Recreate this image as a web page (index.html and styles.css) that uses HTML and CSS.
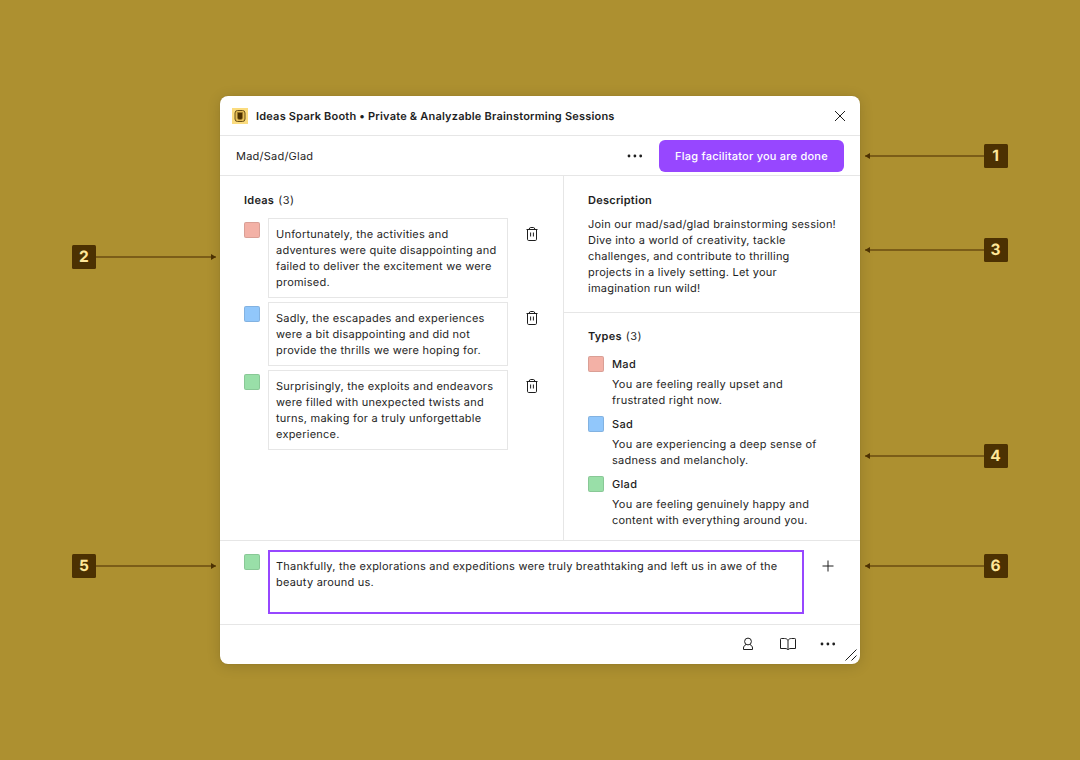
FILE: index.html
```html
<!DOCTYPE html>
<html lang="en">
<head>
<meta charset="utf-8">
<title>Ideas Spark Booth</title>
<link rel="stylesheet" href="styles.css">
</head>
<body>
<svg class="symbols" width="0" height="0">
  <symbol id="trash" viewBox="0 0 16 18"><path d="M2.500 4.500h11M5.200 4.300q.1-1.800 1.500-1.800h2.600q1.400 0 1.500 1.800M3.500 4.500v9.800q0 1.200 1.200 1.200h6.600q1.200 0 1.200-1.200V4.500M6.600 7.500v4M9.400 7.500v4"/></symbol>
  <symbol id="dots" viewBox="0 0 16 16"><circle cx="2" cy="8" r="1.400"/><circle cx="7.900" cy="8" r="1.400"/><circle cx="13.700" cy="8" r="1.400"/></symbol>
</svg>
<div class="stage">
  <aside class="side">
    <div class="callout left c2"><b class="num">2</b><i class="line"></i></div>
    <div class="callout left c5"><b class="num">5</b><i class="line"></i></div>
  </aside>
  <main class="window">
    <header class="titlebar">
      <svg class="logo" width="16" height="16" viewBox="0 0 16 16"><rect width="16" height="16" fill="#fbdc7f"/><rect x="3" y="2.500" width="10" height="11" rx="2.500" fill="#e5bd55" stroke="#695019"/><path d="M5.500 4.500h5v5.800l-1.300 1.200H6.800L5.500 10.300z" fill="#4c3102" stroke="#98782f" stroke-width=".7"/></svg>
      <h1 class="title">Ideas Spark Booth • Private &amp; Analyzable Brainstorming Sessions</h1>
      <svg class="icon" width="16" height="16" viewBox="0 0 16 16"><path d="M3 3l10 10M13 3L3 13"/></svg>
    </header>
    <div class="toolbar">
      <span class="name">Mad/Sad/Glad</span>
      <svg class="dots" width="16" height="16"><use href="#dots"/></svg>
      <button class="button">Flag facilitator you are done</button>
    </div>
    <div class="content">
      <section class="ideas">
        <h2 class="heading">Ideas <span class="count">(3)</span></h2>
        <div class="idea"><i class="swatch mad"></i><p class="note">Unfortunately, the activities and<br>adventures were quite disappointing and<br>failed to deliver the excitement we were<br>promised.</p><svg class="icon trash" width="16" height="18"><use href="#trash"/></svg></div>
        <div class="idea"><i class="swatch sad"></i><p class="note">Sadly, the escapades and experiences<br>were a bit disappointing and did not<br>provide the thrills we were hoping for.</p><svg class="icon trash" width="16" height="18"><use href="#trash"/></svg></div>
        <div class="idea"><i class="swatch glad"></i><p class="note">Surprisingly, the exploits and endeavors<br>were filled with unexpected twists and<br>turns, making for a truly unforgettable<br>experience.</p><svg class="icon trash" width="16" height="18"><use href="#trash"/></svg></div>
      </section>
      <div class="info">
        <section class="description">
          <h2 class="heading">Description</h2>
          <p class="text">Join our mad/sad/glad brainstorming session!<br>Dive into a world of creativity, tackle<br>challenges, and contribute to thrilling<br>projects in a lively setting. Let your<br>imagination run wild!</p>
        </section>
        <section class="types">
          <h2 class="heading">Types <span class="count">(3)</span></h2>
          <div class="type"><i class="swatch mad"></i><div class="detail"><h3 class="label">Mad</h3><p class="text">You are feeling really upset and<br>frustrated right now.</p></div></div>
          <div class="type"><i class="swatch sad"></i><div class="detail"><h3 class="label">Sad</h3><p class="text">You are experiencing a deep sense of<br>sadness and melancholy.</p></div></div>
          <div class="type"><i class="swatch glad"></i><div class="detail"><h3 class="label">Glad</h3><p class="text">You are feeling genuinely happy and<br>content with everything around you.</p></div></div>
        </section>
      </div>
    </div>
    <div class="composer">
      <i class="swatch glad"></i>
      <div class="field">Thankfully, the explorations and expeditions were truly breathtaking and left us in awe of the<br>beauty around us.</div>
      <svg class="icon plus" width="16" height="16" viewBox="0 0 16 16"><path d="M8 2.500v11M2.500 8h11"/></svg>
    </div>
    <footer class="footer">
      <svg class="icon" width="16" height="16" viewBox="0 0 16 16"><circle cx="8" cy="5.500" r="3.400"/><path d="M6 8.500C4.600 9.300 3.500 10.500 3.500 12v1.500h9V12c0-1.500-1.100-2.700-2.500-3.500"/></svg>
      <svg class="icon" width="18" height="16" viewBox="0 0 18 16"><path d="M9 4.500C8.500 3.200 7.200 2.500 5.500 2.500H2.300q-.8 0-.8.800v9.200H6c1.500 0 2.500.4 3 1.500.5-1.100 1.500-1.500 3-1.500h4.500V3.300q0-.8-.8-.8h-3.200C10.800 2.500 9.500 3.200 9 4.500zM9 4.500v9"/></svg>
      <svg class="dots" width="16" height="16"><use href="#dots"/></svg>
      <svg class="icon resize" width="14" height="14" viewBox="0 0 14 14"><path d="M1.500 12.500l11-11M7.500 12.500l5-5"/></svg>
    </footer>
  </main>
  <aside class="side">
    <div class="callout right c1"><i class="line"></i><b class="num">1</b></div>
    <div class="callout right c3"><i class="line"></i><b class="num">3</b></div>
    <div class="callout right c4"><i class="line"></i><b class="num">4</b></div>
    <div class="callout right c6"><i class="line"></i><b class="num">6</b></div>
  </aside>
</div>
</body>
</html>
```

FILE: styles.css
```css
* { box-sizing: border-box; }
body { margin: 0; background: #ad9030; color: #1e1e1e; font: 400 11px/16px Inter, "Liberation Sans", sans-serif; letter-spacing: .23px; text-rendering: geometricPrecision; }
h1, h2, h3, p { margin: 0; font-size: inherit; }
svg { display: block; flex: none; }
.symbols { position: absolute; }
.stage { display: grid; grid-template-columns: 220px 640px 220px; height: 760px; padding: 96px 0; overflow: hidden; }
.side { position: relative; }

.window { display: flex; flex-direction: column; height: 568px; background: #fff; border-radius: 8px; box-shadow: 0 2px 14px rgba(0,0,0,.15), 0 0 1px rgba(0,0,0,.2); }
.icon { fill: none; stroke: #1e1e1e; stroke-width: 1; }
.dots { fill: #1e1e1e; }

.titlebar { display: flex; align-items: center; gap: 8px; height: 40px; padding: 0 12px; border-bottom: 1px solid #e6e6e6; }
.title { flex: 1; font-weight: 600; letter-spacing: .2px; white-space: nowrap; }

.toolbar { display: flex; align-items: center; height: 40px; padding: 0 16px; border-bottom: 1px solid #e6e6e6; }
.name { flex: 1; }
.button { width: 185px; height: 32px; margin-left: 16px; padding: 0; border: 0; border-radius: 6px; background: #9747ff; color: #fff; font: 500 11px/16px Inter, sans-serif; letter-spacing: .23px; text-rendering: inherit; white-space: nowrap; }

.content { display: grid; grid-template: 100% / 344px 296px; height: 365px; border-bottom: 1px solid #e6e6e6; }
.ideas { padding: 16px 24px; border-right: 1px solid #e6e6e6; }
.heading { font-weight: 600; letter-spacing: .25px; }
.count { margin-left: 1px; font-weight: 400; letter-spacing: .5px; }
.swatch { flex: none; width: 16px; height: 16px; border: 1px solid rgba(0,0,0,.1); border-radius: 2px; }
.mad { background-color: #f3b1a6; }
.sad { background-color: #91c7fb; }
.glad { background-color: #99dfa8; }
.idea { display: flex; margin-top: 4px; }
.heading + .idea { margin-top: 10px; }
.idea .swatch { margin: 4px 8px 0 0; }
.note { flex: none; width: 240px; padding: 7px; border: 1px solid #e6e6e6; white-space: nowrap; }
.trash { margin: 7px 0 0 16px; }

.description { height: 137px; padding: 16px 24px; border-bottom: 1px solid #e6e6e6; white-space: nowrap; }
.description .text { margin-top: 8px; }
.types { padding: 15px 24px 0; white-space: nowrap; }
.type { display: flex; gap: 8px; margin-top: 8px; }
.heading + .type { margin-top: 12px; }
.label { font-weight: 500; letter-spacing: .3px; }
.type .text { margin-top: 4px; }

.composer { display: flex; height: 84px; padding: 9px 24px; border-bottom: 1px solid #e6e6e6; }
.composer .swatch { margin: 4px 8px 0 0; }
.field { flex: none; width: 536px; height: 64px; padding: 6px; border: 2px solid #9747ff; white-space: nowrap; }
.plus { margin: 8px 0 0 16px; }

.footer { position: relative; flex: 1; display: flex; align-items: center; justify-content: flex-end; gap: 23px; padding: 0 24px 1px 0; }
.resize { position: absolute; right: 2px; bottom: 2px; }

.callout { position: absolute; display: flex; align-items: center; height: 24px; }
.left { left: 72px; width: 144px; }
.right { left: 4.5px; width: 143px; }
.c1 { top: 48px; }
.c2 { top: 149px; }
.c3 { top: 142px; }
.c4 { top: 348px; }
.c5 { top: 458px; }
.c6 { top: 458px; }
.num { width: 24px; height: 24px; border-radius: 1.5px; background: #4c3102; color: #ffe799; font: 700 15.5px/24px Inter, sans-serif; letter-spacing: 0; text-align: center; }
.line { position: relative; flex: 1; height: 2px; background: #7b5d18; }
.line::after { content: ""; position: absolute; top: -2px; border: 3px solid transparent; }
.left .line::after { right: 0; border-width: 3px 0 3px 5px; border-left-color: #4c3102; }
.right .line::after { left: 0; border-width: 3px 5px 3px 0; border-right-color: #4c3102; }
```
